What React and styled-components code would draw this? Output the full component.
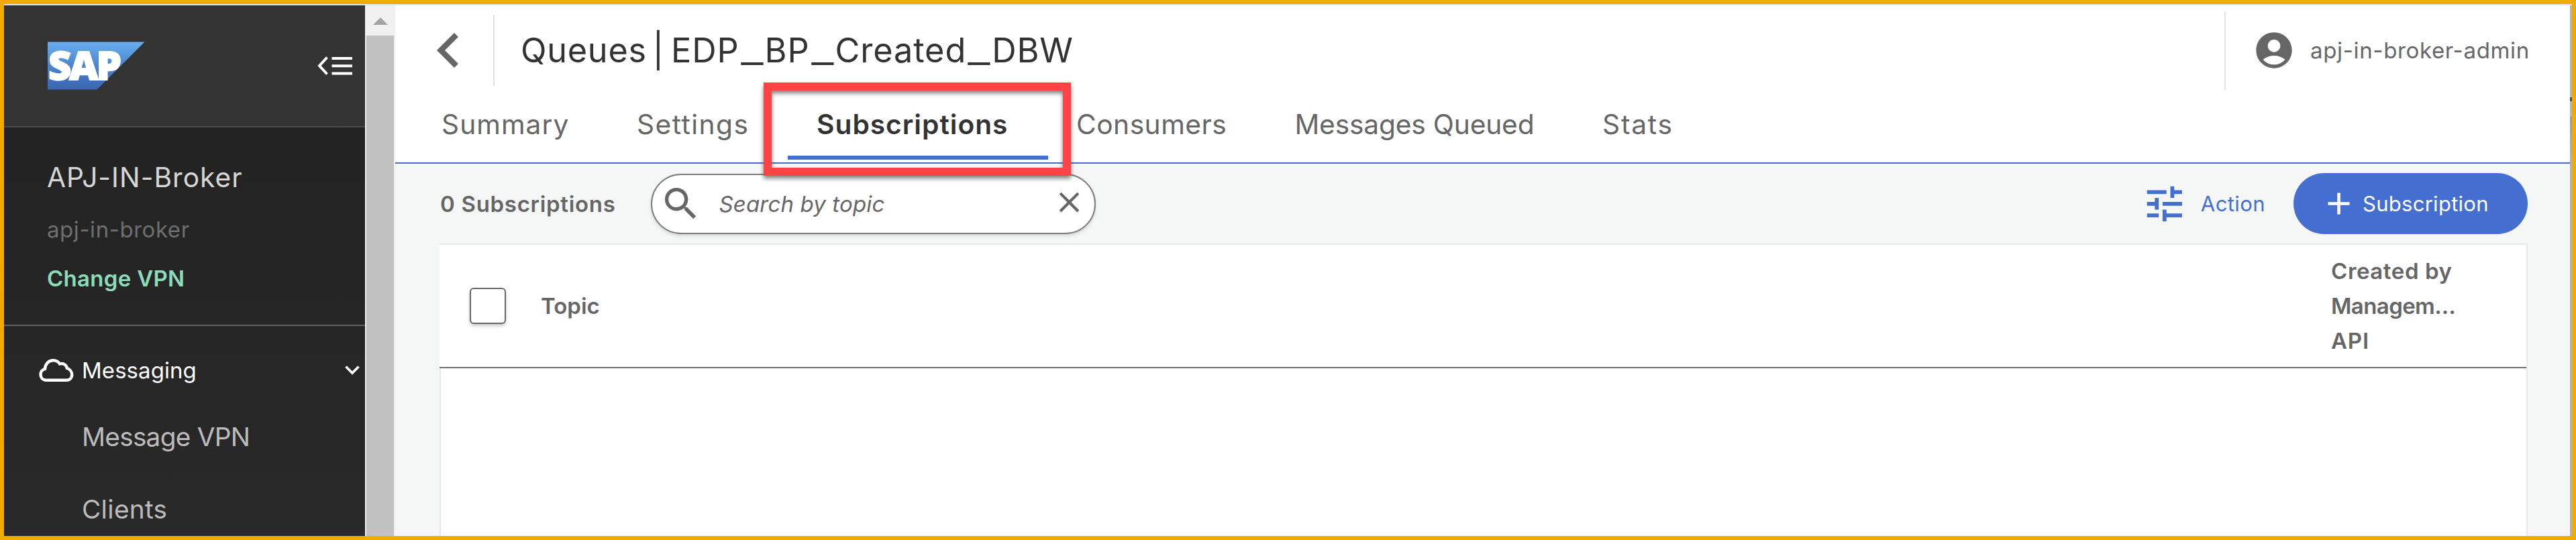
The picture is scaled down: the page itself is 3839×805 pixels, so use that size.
import React from "react";
import styled, { createGlobalStyle } from "styled-components";
import { MdAccountCircle, MdAdd, MdClose, MdSearch, MdTune } from "react-icons/md";

const color = {
  gold: "#f0ab00",
  blue: "#446fd1",
  text: "#666666",
  dark: "#333333",
  surface: "#f5f7f7",
  line: "#e6e8e8",
  mint: "#8cdcb9",
};

const GlobalStyle = createGlobalStyle`
  *, *::before, *::after { box-sizing: border-box; }
  body { margin: 0; font-family: Inter, Roboto, "Liberation Sans", sans-serif; }
  svg { display: block; flex: none; }
`;

const Frame = styled.div`
  width: 3839px;
  height: 805px;
  display: flex;
  flex-direction: column;
  border: 6px solid ${color.gold};
  background: #fff;
  overflow: hidden;
`;

const TopHairline = styled.div`
  flex: none;
  height: 2px;
  background: #e2e2e2;
`;

const Body = styled.div`
  flex: 1;
  min-height: 0;
  display: flex;
`;

const Label = styled.span`
  display: block;
  flex: none;
  white-space: nowrap;
  font-size: ${(p) => p.$size ?? 33}px;
  line-height: ${(p) => p.$leading ?? 42}px;
  font-weight: ${(p) => p.$weight ?? 400};
  letter-spacing: ${(p) => p.$track ?? 0}px;
  color: ${(p) => p.$color ?? color.text};
`;

/* ---------- Sidebar ---------- */

const Sidebar = styled.aside`
  flex: none;
  width: 538px;
  display: flex;
  flex-direction: column;
  background: linear-gradient(#212121, #292929);
`;

const SidebarHeader = styled.div`
  flex: none;
  height: 182px;
  display: flex;
  align-items: center;
  justify-content: space-between;
  padding: 0 19px 0 64px;
  border-bottom: 2px solid #4c4c4c;
  background: #333333;
`;

const VpnBlock = styled.div`
  flex: none;
  height: 296px;
  padding: 50px 0 0 64px;
  display: flex;
  flex-direction: column;
  gap: 31px;
  border-bottom: 2px solid #606060;
`;

const SectionRow = styled.div`
  margin-top: 45px;
  padding: 0 8px 0 52px;
  display: flex;
  align-items: center;
`;

const SectionName = styled(Label)`
  flex: 1;
  margin-left: 12px;
`;

const SubItems = styled.div`
  display: flex;
  flex-direction: column;
  gap: 58px;
  padding: 53px 0 0 116px;
`;

/* ---------- Scrollbar ---------- */

const Scrollbar = styled.div`
  flex: none;
  width: 45px;
  display: flex;
  flex-direction: column;
  align-items: center;
  background: #f0f0f0;
`;

const ScrollArrow = styled.div`
  height: 45px;
  padding-top: 18px;
`;

const ScrollThumb = styled.div`
  flex: 1;
  width: 41px;
  background: #c1c1c1;
`;

/* ---------- Main ---------- */

const Main = styled.main`
  flex: 1;
  min-width: 0;
  display: flex;
  flex-direction: column;
  background: ${color.surface};
`;

const PageHeader = styled.header`
  flex: none;
  height: 134px;
  display: flex;
  align-items: center;
  padding: 0 62px;
  background: #fff;
`;

const VRule = styled.div`
  width: 2px;
  height: ${(p) => p.$height}px;
  background: #e3e3e3;
`;

const Title = styled.h1`
  flex: 1;
  display: flex;
  margin: 0 0 0 39px;
  font-size: 50.4px;
  line-height: 64px;
  font-weight: 400;
  color: ${color.dark};
  white-space: nowrap;
`;

const TitleSection = styled.span`
  width: 196px;
  letter-spacing: 0.72px;
`;

const TitleBar = styled.span`
  width: 18px;
  margin-right: 10px;
  text-align: center;
`;

const TitleName = styled.span`
  letter-spacing: 0.9px;
`;

const Underscore = styled.span`
  display: inline-block;
  width: 38px;
  text-align: center;
  letter-spacing: 0;
  transform: scaleX(1.45);
`;

const User = styled.div`
  display: flex;
  align-items: center;
  gap: 22px;
  width: 411px;
  margin-left: 40px;
`;

const TabBar = styled.nav`
  flex: none;
  height: 102px;
  display: flex;
  padding-left: 69px;
  background: #fff;
  border-bottom: 2px solid ${color.blue};
`;

const Tab = styled.div`
  flex: none;
  position: relative;
  width: ${(p) => p.$width}px;
  height: 96px;
  padding-top: 19px;
  padding-left: ${(p) => (p.$active ? 43 : 0)}px;
  margin-right: ${(p) => (p.$active ? 42 : 0)}px;
  border-bottom: ${(p) => (p.$active ? 6 : 0)}px solid ${color.blue};
`;

const Highlight = styled.div`
  position: absolute;
  z-index: 2;
  left: -36px;
  top: -19px;
  width: 458px;
  height: 139px;
  border: 12px solid #fd4343;
  filter: drop-shadow(0 4px 3px rgba(0, 0, 0, 0.5));
`;

const Toolbar = styled.div`
  flex: none;
  height: 119px;
  display: flex;
  align-items: center;
  padding: 0 63px 0 67px;
`;

const Count = styled(Label)`
  width: 314px;
`;

const SearchBox = styled.div`
  width: 663px;
  height: 90px;
  display: flex;
  align-items: center;
  padding: 0 12px 0 11px;
  border: 2px solid #7d7d7d;
  border-radius: 45px;
  background: #fff;
  box-shadow: 0 3px 5px rgba(0, 0, 0, 0.12);
`;

const SearchIconSlot = styled.div`
  margin-right: 25px;
`;

const Placeholder = styled(Label)`
  flex: 1;
  font-style: italic;
`;

const ClearSlot = styled.div`
  padding-bottom: 5px;
`;

const ActionButton = styled.div`
  display: flex;
  align-items: center;
  gap: 19px;
  margin-left: auto;
  margin-right: 42px;
  color: ${color.blue};
`;

const PrimaryButton = styled.div`
  width: 349px;
  height: 91px;
  display: flex;
  align-items: center;
  gap: 8px;
  padding-left: 40px;
  border-radius: 46px;
  background: ${color.blue};
  color: #fff;
`;

const Table = styled.section`
  flex: 1;
  margin: 0 63px 0 66px;
  display: flex;
  flex-direction: column;
  border: 2px solid ${color.line};
  border-bottom: 0;
  background: #fff;
`;

const TableHead = styled.div`
  height: 184px;
  margin-left: -2px;
  display: flex;
  align-items: center;
  padding-left: 45px;
  background: #fff;
  border-bottom: 2px solid #707070;
`;

const Checkbox = styled.div`
  width: 54px;
  height: 54px;
  border: 2px solid ${color.text};
  border-radius: 6px;
  background: #fff;
  box-shadow: 0 3px 5px rgba(0, 0, 0, 0.2);
`;

const TopicCell = styled(Label)`
  flex: 1;
  margin-left: 52px;
`;

const CreatedCell = styled.div`
  width: 291px;
`;

const EdgeStrip = styled.div`
  flex: none;
  width: 3px;
  background: linear-gradient(#b4b4b4 137px, #4a4a4a 137px 143px, #b4b4b4 143px 166px, #9a9a9a 166px, #b0b0b0 230px);
`;

/* ---------- Drawings ---------- */

const SapLogo = () => (
  <svg width="146" height="72" viewBox="0 0 146 72">
    <defs>
      <linearGradient id="sap" x1="0" y1="0" x2="0" y2="1">
        <stop offset="0" stopColor="#6aaef0" />
        <stop offset="0.5" stopColor="#4a86cd" />
        <stop offset="1" stopColor="#3b64b1" />
      </linearGradient>
    </defs>
    <path d="M1 0.5H145.500L74.500 71.500H1Z" fill="url(#sap)" />
    <g
      fontFamily="Open Sans"
      fontWeight="800"
      fontSize="59"
      fill="#fff"
      stroke="#fff"
      strokeWidth="2"
    >
      <text y="57" textLength="106" lengthAdjust="spacingAndGlyphs" x="2" letterSpacing="-3">
        SAP
      </text>
    </g>
  </svg>
);

const CollapseIcon = () => (
  <svg width="52" height="28" viewBox="0 0 52 28" stroke="#fff" fill="none" strokeWidth="4">
    <path d="M14.500 1.500L3 14L14.500 26.500M21.500 3H52M21.500 14.300H52M21.500 25.500H52" />
  </svg>
);

const CloudIcon = () => (
  <svg width="52" height="35" viewBox="0 0 52 35" fill="none" stroke="#fff" strokeWidth="4.400">
    <path d="M11 31.700C5.500 31.700 2.500 28 2.500 23.200C2.500 19.200 5 16.300 9 15C9.300 7.500 14.500 2.300 21.400 2.300C25.500 2.300 28.800 4 31 7.400C36 6 41 8.500 41.800 13.800C46 15.300 49.200 19 49.200 23.500C49.200 28.500 46 31.700 41 31.700Z" />
  </svg>
);

const ChevronDown = () => (
  <svg width="22" height="14" viewBox="0 0 22 14" fill="none" stroke="#fff" strokeWidth="3.800">
    <path d="M1.500 1.500L11 11L20.500 1.500" />
  </svg>
);

const BackIcon = () => (
  <svg width="32" height="52" viewBox="0 0 32 52" fill="none" stroke={color.text} strokeWidth="8.500">
    <path d="M29 3L6 26L29 49" />
  </svg>
);

const BackSlot = styled.div`
  width: 84px;
`;

export default function App() {
  return (
    <>
      <GlobalStyle />
      <Frame>
        <TopHairline />
        <Body>
          <Sidebar>
            <SidebarHeader>
              <SapLogo />
              <CollapseIcon />
            </SidebarHeader>
            <VpnBlock>
              <Label $size={40.7} $leading={50} $track={1} $color="#d6d6d6">APJ-IN-Broker</Label>
              <Label $track={0.55} $color="#6f6f6f">apj-in-broker</Label>
              <Label $weight={600} $track={0.3} $color={color.mint}>Change VPN</Label>
            </VpnBlock>
            <SectionRow>
              <CloudIcon />
              <SectionName $track={0.05} $color="#ffffff">Messaging</SectionName>
              <ChevronDown />
            </SectionRow>
            <SubItems>
              <Label $size={38.8} $leading={50} $track={-0.75} $color="#bcbcbc">Message VPN</Label>
              <Label $size={38.8} $leading={50} $track={0.26} $color="#bcbcbc">Clients</Label>
            </SubItems>
          </Sidebar>

          <Scrollbar>
            <ScrollArrow>
              <svg width="22" height="11" viewBox="0 0 22 11">
                <path d="M0 11L11 0L22 11Z" fill="#a3a3a3" />
              </svg>
            </ScrollArrow>
            <ScrollThumb />
          </Scrollbar>

          <Main>
            <PageHeader>
              <BackSlot>
                <BackIcon />
              </BackSlot>
              <VRule $height={106} />
              <Title>
                <TitleSection>Queues</TitleSection>
                <TitleBar>|</TitleBar>
                <TitleName>
                  EDP<Underscore>_</Underscore>BP<Underscore>_</Underscore>Created<Underscore>_</Underscore>DBW
                </TitleName>
              </Title>
              <VRule $height={117} />
              <User>
                <MdAccountCircle size={64} color={color.text} />
                <Label $track={0.65}>apj-in-broker-admin</Label>
              </User>
            </PageHeader>

            <TabBar>
              <Tab $width={291}>
                <Label $size={40.7} $leading={50} $track={1.03}>Summary</Label>
              </Tab>
              <Tab $width={225}>
                <Label $size={40.7} $leading={50} $track={1.45}>Settings</Label>
              </Tab>
              <Tab $width={388} $active>
                <Label $size={40.7} $leading={50} $weight={600} $track={1} $color={color.dark}>
                  Subscriptions
                </Label>
                <Highlight />
              </Tab>
              <Tab $width={325.5}>
                <Label $size={40.7} $leading={50} $track={0.49}>Consumers</Label>
              </Tab>
              <Tab $width={458.5}>
                <Label $size={40.7} $leading={50} $track={-0.17}>Messages Queued</Label>
              </Tab>
              <Tab $width={110}>
                <Label $size={40.7} $leading={50} $track={1.8}>Stats</Label>
              </Tab>
            </TabBar>

            <Toolbar>
              <Count $weight={600} $track={0.7}>0 Subscriptions</Count>
              <SearchBox>
                <SearchIconSlot>
                  <MdSearch size={63.5} color={color.text} />
                </SearchIconSlot>
                <Placeholder $track={0.15}>Search by topic</Placeholder>
                <ClearSlot>
                  <MdClose size={51} color={color.text} />
                </ClearSlot>
              </SearchBox>
              <ActionButton>
                <MdTune size={69.6} />
                <Label $size={31} $track={0.42} $color={color.blue}>Action</Label>
              </ActionButton>
              <PrimaryButton>
                <MdAdd size={55} />
                <Label $size={31} $track={0.28} $color="#ffffff">Subscription</Label>
              </PrimaryButton>
            </Toolbar>

            <Table>
              <TableHead>
                <Checkbox />
                <TopicCell $weight={600}>Topic</TopicCell>
                <CreatedCell>
                  <Label $weight={600} $leading={52} $track={0.6}>Created by</Label>
                  <Label $weight={600} $leading={52} $track={-0.6}>Managem…</Label>
                  <Label $weight={600} $leading={52} $track={0.8}>API</Label>
                </CreatedCell>
              </TableHead>
            </Table>
          </Main>
          <EdgeStrip />
        </Body>
      </Frame>
    </>
  );
}
